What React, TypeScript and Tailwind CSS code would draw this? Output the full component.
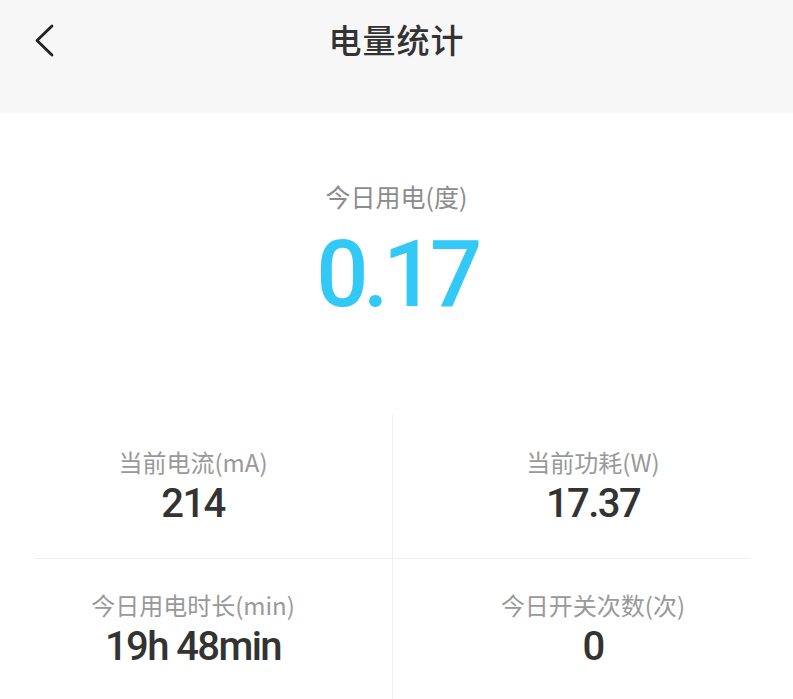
import { ReactNode } from 'react'

const CJK = { fontFamily: '"Noto Sans CJK SC", "Noto Sans", sans-serif' }
const NUM = { fontFamily: 'Roboto, "Noto Sans CJK SC", sans-serif' }

const stats = [
  { label: '当前电流(mA)', value: '214' },
  { label: '当前功耗(W)', value: '17.37' },
  { label: '今日用电时长(min)', value: '19h 48min' },
  { label: '今日开关次数(次)', value: '0' },
]

export default function App() {
  return (
    <div className="w-[793px] h-[699px] overflow-hidden bg-white" style={CJK}>
      <header className="h-[113px] bg-[#f7f7f7]">
        <div className="grid grid-cols-[1fr_auto_1fr] items-center h-[80px] px-[34px]">
          <button className="w-[24px] h-[34px] flex items-center">
            <svg width="22" height="34" viewBox="0 0 22 34" fill="none">
              <path d="M18 3 L3 17.5 L18 32" stroke="#222" strokeWidth="2.8" strokeLinecap="round" strokeLinejoin="round" />
            </svg>
          </button>
          <h1 className="text-[33px] font-medium text-[#333] tracking-[1px]">电量统计</h1>
          <div />
        </div>
      </header>

      <section className="flex flex-col items-center pt-[66px] h-[302px]">
        <p className="text-[25px] leading-[34px] text-[#8c8c8c]">今日用电(度)</p>
        <p className="text-[92px] leading-[100px] mt-[12px] font-medium text-[#33c9f6] tracking-[-0.06em]" style={NUM}>
          0.17
        </p>
      </section>

      <div className="grid grid-cols-[392px_1fr]">
        {stats.map((s, i) => (
          <Cell key={s.label} right={i % 2 === 1} top={i < 2}>
            <p className="text-[24px] leading-[32px] text-[#999]">{s.label}</p>
            <p className="text-[40px] leading-[46px] mt-[3px] font-medium text-[#333] tracking-[-0.04em]" style={NUM}>
              {s.value}
            </p>
          </Cell>
        ))}
      </div>
    </div>
  )
}

function Cell({ children, right, top }: { children: ReactNode; right: boolean; top: boolean }) {
  return (
    <div className={right ? 'flex flex-col h-[144px] border-l border-[#efefef]' : 'flex flex-col h-[144px]'}>
      <div
        className={
          right
            ? top
              ? 'flex flex-col items-center flex-1 pt-[31px]'
              : 'flex flex-col items-center flex-1 pt-[30px]'
            : top
              ? 'flex flex-col items-center flex-1 pt-[31px] pl-[29px] pr-[35px]'
              : 'flex flex-col items-center flex-1 pt-[30px] pl-[29px] pr-[35px]'
        }
      >
        {children}
      </div>
      {top && <div className={right ? 'h-px bg-[#efefef] mr-[43px]' : 'h-px bg-[#efefef] ml-[35px]'} />}
    </div>
  )
}
